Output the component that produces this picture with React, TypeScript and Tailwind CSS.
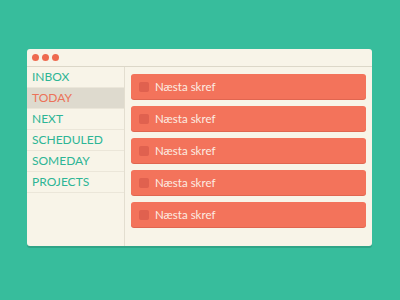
import React from "react";

const nav = ["INBOX", "TODAY", "NEXT", "SCHEDULED", "SOMEDAY", "PROJECTS"];

export default function App() {
  return (
    <div
      className="w-[400px] h-[300px] bg-[#37bd9c] pt-[49px] pl-[27px]"
      style={{ fontFamily: "Lato, 'Open Sans', sans-serif" }}
    >
      <div className="w-[345px] h-[197px] bg-[#f8f4e8] rounded-[3px] flex flex-col shadow-[0_2px_0_#2fa487] overflow-hidden">
        <div className="h-[18px] flex items-center gap-[3px] pl-[5px] border-b border-[#dcd7c8] shrink-0">
          <span className="w-[7px] h-[7px] rounded-full bg-[#ee6a4f]" />
          <span className="w-[7px] h-[7px] rounded-full bg-[#ee6a4f]" />
          <span className="w-[7px] h-[7px] rounded-full bg-[#ee6a4f]" />
        </div>
        <div className="flex flex-1">
          <div className="w-[98px] border-r border-[#e3ded0] flex flex-col">
            {nav.map((n) => (
              <div
                key={n}
                className={`h-[21px] flex items-center pl-[5px] text-[12px] border-b border-[#ebe6d9] ${
                  n === "TODAY" ? "bg-[#dedace] text-[#ec7259]" : "text-[#2db595]"
                }`}
              >
                {n}
              </div>
            ))}
          </div>
          <div className="flex-1 flex flex-col gap-[7px] pt-[7px] pl-[6px] pr-[6px]">
            {[0, 1, 2, 3, 4].map((i) => (
              <div
                key={i}
                className="h-[25px] bg-[#f3735b] rounded-[3px] flex items-center pl-[8px] gap-[6px] shadow-[0_1px_0_#e06650]"
              >
                <span className="w-[10px] h-[10px] rounded-[2px] bg-[#e0614f]" />
                <span className="text-[11.5px] text-[#fcece2]">Næsta skref</span>
              </div>
            ))}
          </div>
        </div>
      </div>
    </div>
  );
}
